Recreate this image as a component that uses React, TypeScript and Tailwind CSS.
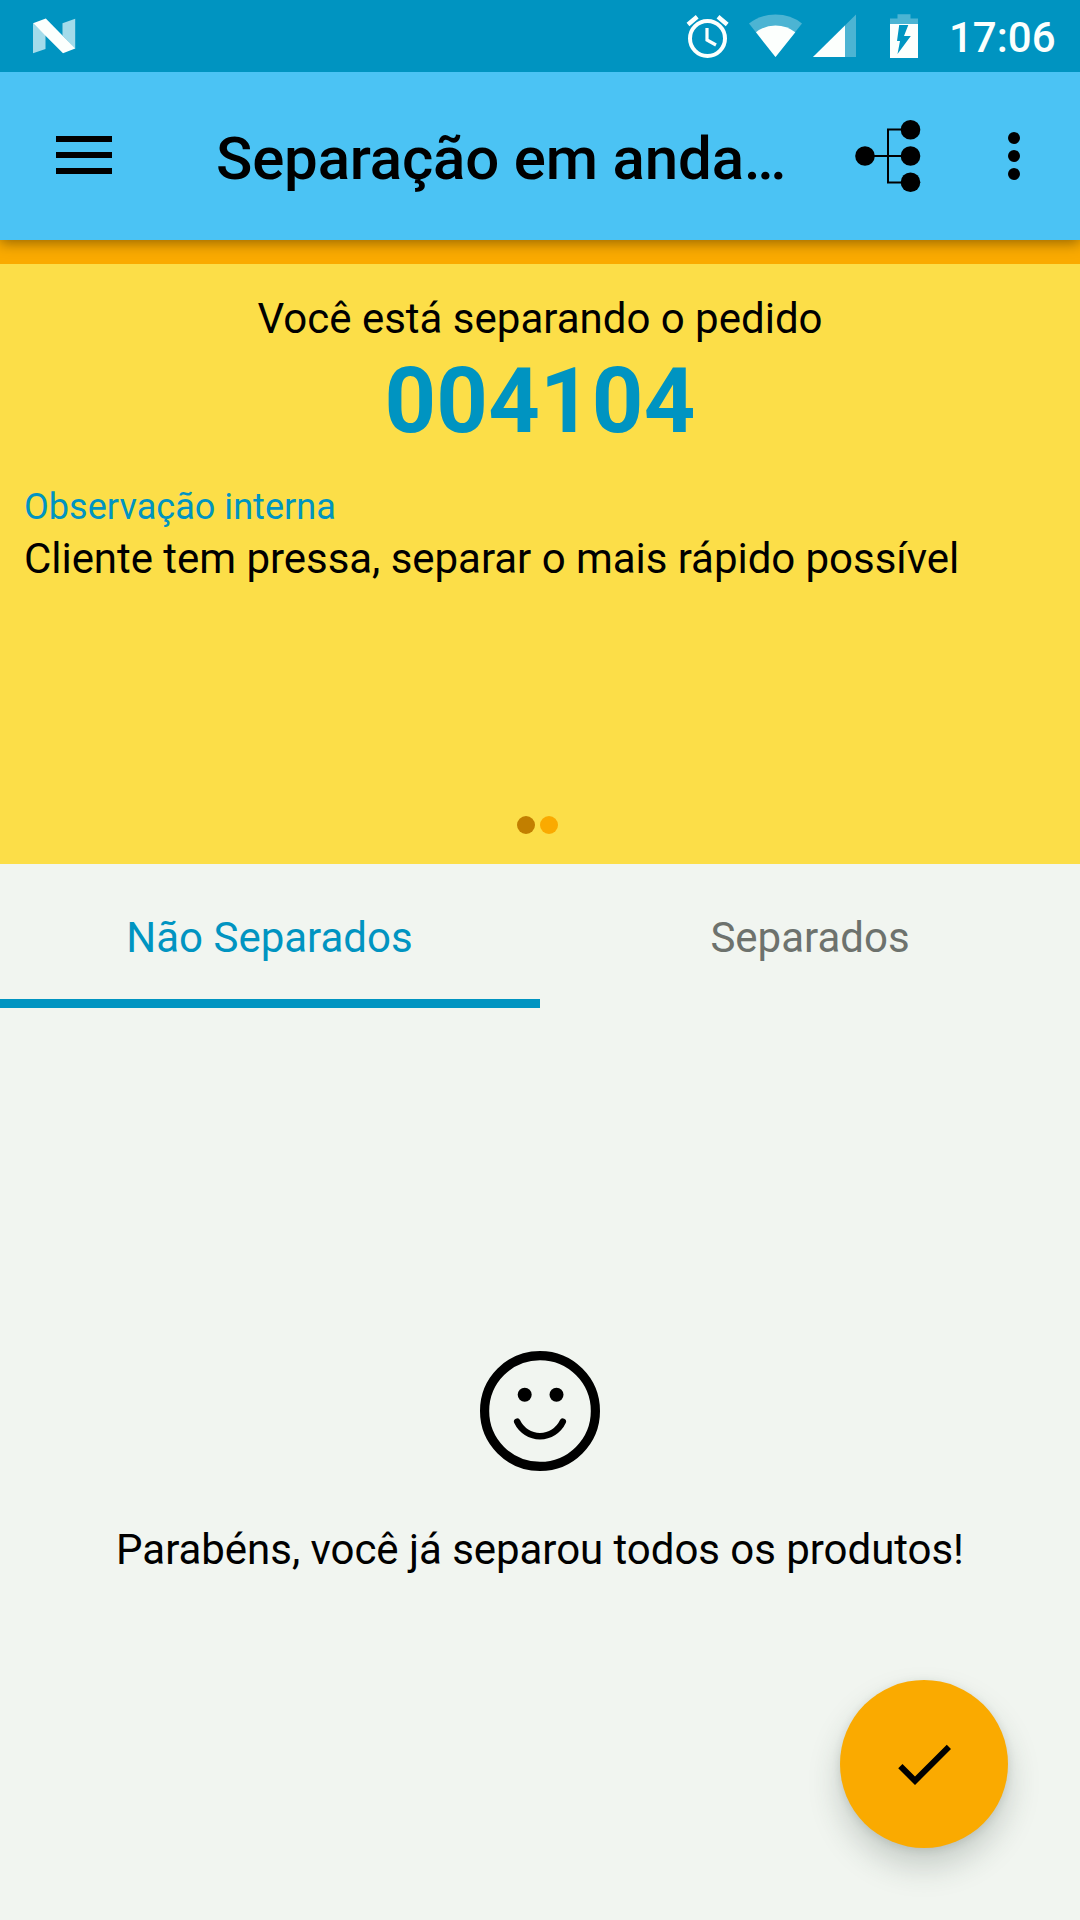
function NougatIcon() {
  return (
    <svg className="block h-[72px] w-[43px]" viewBox="33 0 43 72">
      <path d="M33 23.5 45.5 35V49L33 53.2Z M75.2 18.8V49L62.5 35.5V23.3Z" fill="#a3dbea" />
      <path d="M33 23.3 45.8 18.6 75.2 48.6 63 53.2Z" fill="#fcfffd" />
    </svg>
  );
}

function AlarmIcon() {
  return (
    <svg className="block h-[72px] w-[43px]" viewBox="686 0 43 72" fill="none" stroke="#fcfffd">
      <circle cx="707.5" cy="38.5" r="17.5" strokeWidth="4" />
      <path d="M707 28V40L716 45" strokeWidth="3.2" />
      <path d="M688 24.5 697.2 16.8 M727.2 24.5 718 16.8" strokeWidth="4.4" />
    </svg>
  );
}

function WifiIcon() {
  return (
    <svg className="block h-[72px] w-[54px]" viewBox="749 0 54 72">
      <path d="M775.5 57 749 23.5Q760 14.5 775.5 14.5T802 23.5Z" fill="#4cb4d3" />
      <path d="M775.5 57 756 32.3Q764 25.5 775.5 25.5T795.3 32.3Z" fill="#fcfffd" />
    </svg>
  );
}

function SignalIcon() {
  return (
    <svg className="block h-[72px] w-[43px]" viewBox="813 0 43 72">
      <path d="M813 57 856 14.5V57Z" fill="#4cb4d3" />
      <path d="M813 57 845 25.5V57Z" fill="#fcfffd" />
    </svg>
  );
}

function BatteryIcon() {
  return (
    <svg className="block h-[72px] w-[28px]" viewBox="890 0 28 72">
      <path d="M897.5 14.2H910.5V18.4H918V25H890V18.4H897.5Z" fill="#4cb4d3" />
      <path d="M890 24H918V58H890Z" fill="#fcfffd" />
      <path d="M899.2 25H908.3L904 36H910.8L897.5 54 900 41H897Z" fill="#0095c2" />
    </svg>
  );
}

function StatusBar() {
  return (
    <div className="relative z-20 flex h-[72px] items-start bg-[#0094c1] pr-[25px] pl-[33px]">
      <NougatIcon />
      <div className="ml-auto flex">
        <AlarmIcon />
        <div className="ml-5"><WifiIcon /></div>
        <div className="ml-2.5"><SignalIcon /></div>
        <div className="ml-[34px]"><BatteryIcon /></div>
        <span className="ml-[31px] w-[106px] pt-px text-right text-[42px] leading-[74px] font-medium whitespace-nowrap text-[#fcfffd]">17:06</span>
      </div>
    </div>
  );
}

function TreeIcon() {
  return (
    <svg className="block h-[74px] w-[67px]" viewBox="854 119 67 74">
      <path d="M865 156H911 M911 129.5H888V182.5H911" fill="none" stroke="#000" strokeWidth="2" />
      <circle cx="865" cy="156" r="9.8" />
      <circle cx="910.5" cy="129.7" r="9.8" />
      <circle cx="910.5" cy="156" r="9.8" />
      <circle cx="910.5" cy="182.3" r="9.8" />
    </svg>
  );
}

function AppBar() {
  return (
    <header className="relative z-10 flex h-[168px] items-center bg-[#4bc3f4] pr-[60px] pl-14 shadow-[0_3px_13px_rgba(0,0,0,0.4)]">
      <button className="flex w-14 flex-col gap-2.5 pb-[2px]" aria-label="Menu">
        <span className="h-1.5 bg-black" />
        <span className="h-1.5 bg-black" />
        <span className="h-1.5 bg-black" />
      </button>
      <h1 className="ml-[104px] w-[638px] pt-[5px] text-[60px] leading-[70px] font-medium tracking-[-0.18px] whitespace-nowrap">Separação em anda…</h1>
      <button aria-label="Fluxo"><TreeIcon /></button>
      <button className="ml-auto flex flex-col gap-1.5" aria-label="Mais opções">
        <span className="size-3 rounded-full bg-black" />
        <span className="size-3 rounded-full bg-black" />
        <span className="size-3 rounded-full bg-black" />
      </button>
    </header>
  );
}

function OrderPanel() {
  return (
    <section className="flex h-[624px] flex-col border-t-24 border-[#faaa00] bg-[#fcde48] px-6 pt-[30px] pb-[30px]">
      <p className="text-center text-[42px] leading-[50px]">Você está separando o pedido</p>
      <p className="mt-[5px] text-center text-[90px] leading-[106px] font-bold tracking-[0.2px] text-[#0094c1]">004104</p>
      <p className="mt-[31px] text-4xl leading-[42px] tracking-[0.05px] text-[#0094c1]">Observação interna</p>
      <p className="mt-1.5 text-[42px] leading-[50px] tracking-[-0.04px] whitespace-nowrap">Cliente tem pressa, separar o mais rápido possível</p>
      <div className="mt-auto flex justify-center gap-[5px] pr-[5px]">
        <span className="size-[18px] rounded-full bg-[#c27f00]" />
        <span className="size-[18px] rounded-full bg-[#faaa00]" />
      </div>
    </section>
  );
}

function Tabs() {
  return (
    <nav className="grid h-36 grid-cols-2 text-center text-[42px] leading-[50px]">
      <button className="flex items-start justify-center border-b-9 border-[#0094c1] pt-[49px] pr-px text-[#0094c1]">Não Separados</button>
      <button className="flex items-start justify-center pt-[49px] text-[#6d726d]">Separados</button>
    </nav>
  );
}

function SmileIcon() {
  return (
    <svg className="block size-[120px]" viewBox="0 0 120 120">
      <circle cx="60" cy="60" r="55.4" fill="none" stroke="#000" strokeWidth="9.2" />
      <circle cx="44.7" cy="43.7" r="7" />
      <circle cx="76.5" cy="43.7" r="7" />
      <path d="M37.2 70.7A25.2 25.2 0 0 0 82.8 70.7" fill="none" stroke="#000" strokeWidth="6.5" strokeLinecap="round" />
    </svg>
  );
}

export default function App() {
  return (
    <div className="relative flex h-[1920px] w-[1080px] flex-col overflow-hidden bg-[#f1f5f0] text-black" style={{ fontFamily: 'Roboto, sans-serif' }}>
      <StatusBar />
      <AppBar />
      <OrderPanel />
      <Tabs />
      <main className="flex flex-1 flex-col items-center pt-[343px]">
        <SmileIcon />
        <p className="mt-[54px] text-[42px] leading-[50px] tracking-[-0.04px] whitespace-nowrap">Parabéns, você já separou todos os produtos!</p>
      </main>
      <button
        className="absolute right-[72px] bottom-[72px] flex size-[168px] items-center justify-center rounded-full bg-[#faaa00] shadow-[0_18px_32px_rgba(40,60,50,0.22),0_2px_8px_rgba(40,60,50,0.12)]"
        aria-label="Concluir"
      >
        <svg className="block size-[72px]" viewBox="0 0 24 24">
          <path d="M9 16.17 4.83 12l-1.42 1.41L9 19 21 7l-1.41-1.41z" />
        </svg>
      </button>
    </div>
  );
}
